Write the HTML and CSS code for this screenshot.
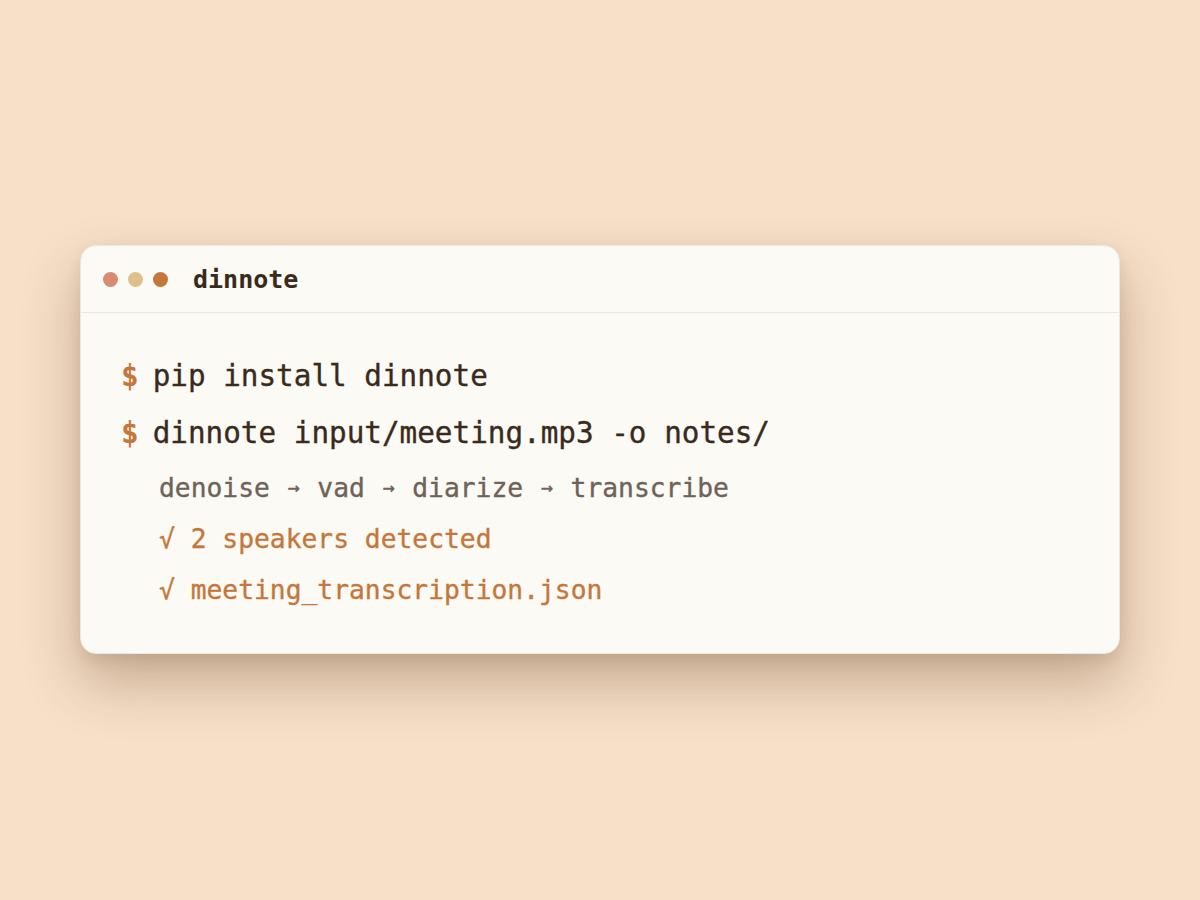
FILE: index.html
```html
<!DOCTYPE html>
<html>
<head>
<meta charset="utf-8">
<link rel="stylesheet" href="styles.css">
</head>
<body>
<div class="stage">
  <div class="term">
    <div class="term-head">
      <div class="dots">
        <span class="dot dot-red"></span>
        <span class="dot dot-yellow"></span>
        <span class="dot dot-orange"></span>
      </div>
      <span class="term-title">dinnote</span>
    </div>
    <div class="term-body">
      <div class="cmd"><span class="prompt">$</span><span>pip install dinnote</span></div>
      <div class="cmd"><span class="prompt">$</span><span>dinnote input/meeting.mp3 -o notes/</span></div>
      <div class="out out-muted">denoise <span class="arrow">→</span> vad <span class="arrow">→</span> diarize <span class="arrow">→</span> transcribe</div>
      <div class="out out-ok">√ 2 speakers detected</div>
      <div class="out out-ok">√ meeting_transcription.json</div>
    </div>
  </div>
</div>
</body>
</html>
```

FILE: styles.css
```css
html, body {
  margin: 0;
  padding: 0;
}
body {
  background: #f7dfc8;
  font-family: "DejaVu Sans Mono", "Liberation Mono", monospace;
}
.stage {
  box-sizing: border-box;
  width: 1200px;
  height: 900px;
  padding: 245px 80px 0 80px;
}
.term {
  box-sizing: border-box;
  width: 1040px;
  background: #fbfaf5;
  border-radius: 16px;
  border: 1px solid #efe7dc;
  box-shadow: 0 28px 56px rgba(90, 60, 25, 0.32), 0 6px 14px rgba(90, 60, 25, 0.1);
  overflow: hidden;
}
.term-head {
  height: 66px;
  display: flex;
  align-items: center;
  padding-left: 22px;
  gap: 25px;
  border-bottom: 1px solid #ebe5dc;
}
.dots {
  display: flex;
  gap: 10px;
}
.dot {
  width: 15px;
  height: 15px;
  border-radius: 50%;
  display: block;
}
.dot-red { background: #d98a72; }
.dot-yellow { background: #dfc08b; }
.dot-orange { background: #c5773b; }
.term-title {
  font-size: 25px;
  font-weight: bold;
  color: #3a2a1c;
}
.term-body {
  padding: 35px 40px 37px 40px;
  -webkit-text-stroke: 0.35px currentColor;
}
.cmd {
  display: flex;
  gap: 14px;
  font-size: 29.3px;
  line-height: 57px;
  color: #3a2a1c;
}
.prompt {
  color: #c5773b;
  font-weight: bold;
  -webkit-text-stroke: 0;
}
.out {
  font-size: 26.3px;
  line-height: 51px;
  padding-left: 38px;
}
.out-muted {
  color: #6e6259;
  margin-top: 1px;
}
.arrow {
  display: inline-block;
  width: 15.8px;
  text-align: center;
  font-size: 20px;
  line-height: 1;
  vertical-align: 3px;
}
.out-ok {
  color: #c5773b;
}
```
